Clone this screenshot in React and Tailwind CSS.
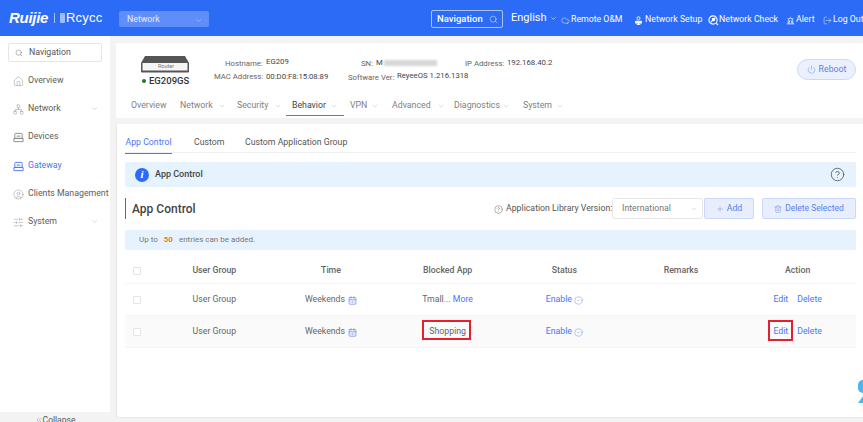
import React from "react";
import { Search, House, Network, ChevronDown, CircleUser, SlidersHorizontal, Cloud, Power, Plus, Trash2, CalendarDays, CircleCheck, CircleHelp, ChevronsLeft, LogOut } from "lucide-react";

const f = { fontFamily: 'Roboto,"Noto Sans",sans-serif' };

function GatewayIcon({ size = 11, strokeWidth = 1, className = "" }) {
  return (
    <svg width={size} height={size} viewBox="0 0 12 12" fill="none" stroke="currentColor" strokeWidth={strokeWidth} className={className}>
      <path d="M3 1.5h6a1 1 0 0 1 1 1V7H2V2.5a1 1 0 0 1 1-1Z" />
      <path d="M1 7h10v3.5H1z" />
      <path d="M4 4.5h4" />
    </svg>
  );
}
function SetupIcon({ size = 9, style }) {
  return (
    <svg width={size} height={size} viewBox="0 0 12 12" fill="none" stroke="currentColor" strokeWidth="1.2" style={style}>
      <circle cx="6" cy="3" r="2" />
      <path d="M2 7h8v2.5H2z" fill="currentColor" />
      <path d="M6 9.5V12M3.5 11.5h5" />
    </svg>
  );
}
function CheckIcon({ size = 11, style }) {
  return (
    <svg width={size} height={size} viewBox="0 0 12 12" fill="none" stroke="currentColor" strokeWidth="1.2" style={style}>
      <circle cx="5.5" cy="5.5" r="4.5" />
      <path d="M3 8l5-5" />
      <circle cx="6" cy="5" r="1.3" fill="currentColor" />
      <path d="M9 9l2 2" />
    </svg>
  );
}
function AlertIcon({ size = 10, style }) {
  return (
    <svg width={size} height={size} viewBox="0 0 12 12" fill="none" stroke="currentColor" strokeWidth="1" style={style}>
      <path d="M3 10V6a3 3 0 0 1 6 0v4M1 10.5h10M6 1v1M2 2.5l1 1M10 2.5l-1 1M5 6l-1 4M7 6l1 4" />
    </svg>
  );
}

function SideItem({ icon: I, label, y, active, chev }) {
  return (
    <div className={`absolute left-0 w-[110px] h-[20px] flex items-center pl-[13px] text-[8.75px] ${active ? "text-[#4a76f5]" : "text-[#5d5d5d]"}`} style={{ top: y }}>
      <I size={11} strokeWidth={1} className={`mr-[4px] shrink-0 ${active ? "" : "text-[#888]"}`} />
      <span className="whitespace-nowrap">{label}</span>
      {chev && <ChevronDown size={9} strokeWidth={1} className="absolute left-[90px] top-[5px] text-[#999]" />}
    </div>
  );
}

function NavTab({ label, x, chev = 0, dark }) {
  return (
    <div className={`absolute top-[97px] h-[18px] flex items-center text-[8.75px] whitespace-nowrap ${dark ? "text-[#444]" : "text-[#808080]"}`} style={{ left: x }}>
      {label}
      {chev > 0 && <ChevronDown size={8} strokeWidth={1} className="absolute top-[5px] text-[#999]" style={{ left: chev }} />}
    </div>
  );
}

function Check() {
  return <div className="ml-[8px] w-[8px] h-[8px] border border-[#e4e4e4] rounded-[1px] bg-white" />;
}

function DataRow({ bg, app }) {
  return (
    <div className={`grid grid-cols-[31px_repeat(6,1fr)] h-[32px] pt-px items-center text-center text-[8.75px] text-[#666] border-b border-[#f2f4f7] ${bg}`}>
      <Check />
      <div>User Group</div>
      <div className="flex items-center justify-center">Weekends<CalendarDays size={9} className="ml-[3px] text-[#6f8ff0]" /></div>
      <div>{app}</div>
      <div className="flex items-center justify-center text-[#4a76f5]">Enable<CircleCheck size={9} strokeWidth={1} className="ml-[2px]" /></div>
      <div />
      <div className="text-[#4a76f5] flex justify-center gap-[9px]"><span>Edit</span><span>Delete</span></div>
    </div>
  );
}

function HeadItem({ x, icon: I, label, size = 9, gap = 1 }) {
  return (
    <div className="absolute top-[11px] h-[18px] flex items-center text-[8.75px] whitespace-nowrap" style={{ left: x }}>
      <I size={size} strokeWidth={1.2} style={{ marginRight: gap }} />
      {label}
    </div>
  );
}

export default function App() {
  return (
    <div className="relative w-[863px] h-[422px] overflow-hidden bg-[#f3f3f3]" style={f}>
      {/* header */}
      <header className="absolute left-0 top-0 w-full h-[36px] bg-[#2b6bf6] text-white">
        <span className="absolute left-[9px] top-[9px] text-[15px] font-bold italic leading-[18px] tracking-[-0.3px]" style={{ fontFamily: '"Liberation Sans",sans-serif' }}>Ruijie</span>
        <div className="absolute left-[54px] top-[13px] w-px h-[10px] bg-[#a9c3fb]" />
        <div className="absolute left-[60px] top-[13px] w-[5px] h-[10px] rounded-[1px] bg-[#9dbcfa]" />
        <span className="absolute left-[66px] top-[9px] text-[13px] leading-[18px] tracking-[0.2px]" style={{ fontFamily: '"Liberation Sans",sans-serif' }}>Rcycc</span>
        <div className="absolute left-[119px] top-[11px] w-[90px] h-[16px] rounded-[2px] bg-[#5f8ef8] flex items-center pl-[8px] pt-px text-[8.75px] text-[#e8eeff]">
          Network
          <ChevronDown size={9} strokeWidth={1} className="absolute left-[75px] top-[5px]" />
        </div>
        <div className="absolute left-[431px] top-[10px] w-[72px] h-[18px] border border-[#a8c4fb] rounded-[2px] flex items-center pl-[5px] pt-px text-[9.5px] font-medium">
          Navigation
          <Search size={9} strokeWidth={1.2} className="absolute left-[57px] top-[4px]" />
        </div>
        <div className="absolute left-[511px] top-[9px] h-[18px] flex items-center text-[11px]">English<ChevronDown size={7} className="ml-[3px]" /></div>
        <HeadItem x={561} icon={Cloud} label="Remote O&M" />
        <HeadItem x={634} icon={SetupIcon} label="Network Setup" gap={2} />
        <HeadItem x={708} icon={CheckIcon} label="Network Check" size={11} gap={0} />
        <HeadItem x={786} icon={AlertIcon} label="Alert" gap={1} />
        <HeadItem x={823} icon={LogOut} label="Log Out" gap={1} />
      </header>

      {/* sidebar */}
      <aside className="absolute left-0 top-[36px] w-[110px] h-[386px] bg-white">
        <div className="absolute left-[8px] top-[7px] w-[94px] h-[19px] border border-[#e6e6e6] rounded-[2px] flex items-center pl-[6px] text-[8.75px] text-[#555]">
          <Search size={8} strokeWidth={1.2} className="mr-[6px]" />Navigation
        </div>
        <SideItem icon={House} label="Overview" y={35} />
        <SideItem icon={Network} label="Network" y={63} chev />
        <SideItem icon={GatewayIcon} label="Devices" y={91} />
        <SideItem icon={GatewayIcon} label="Gateway" y={120} active />
        <SideItem icon={CircleUser} label="Clients Management" y={148} />
        <SideItem icon={SlidersHorizontal} label="System" y={176} chev />
        <div className="absolute left-0 top-[376px] w-[110px] h-[10px] bg-[#f3f3f3] flex items-start pt-[3px] justify-center text-[8.5px] leading-[10px] text-[#555]">
          <ChevronsLeft size={8} strokeWidth={1} className="mt-px" />Collapse
        </div>
      </aside>

      {/* device card */}
      <section className="absolute left-[116px] top-[43px] w-[747px] h-[75px] bg-white rounded-l-[2px]" />
      <svg width="50" height="18" viewBox="0 0 50 18" className="absolute left-[140px] top-[55px]">
        <path d="M5 1h40l4 7v8.5a1 1 0 0 1-1 1H2a1 1 0 0 1-1-1V8Z" fill="#555" />
        <rect x="2.5" y="8" width="45" height="7.5" fill="#f5f5f5" />
      </svg>
      <div className="absolute left-[156px] top-[62px] w-[20px] h-[9px] flex items-center justify-center text-[5.5px] text-[#777]">Router</div>
      <div className="absolute left-[142px] top-[79px] w-[4px] h-[4px] rounded-full bg-[#1f7a1f]" />
      <div className="absolute left-[149px] top-[74px] text-[9.5px] font-medium text-[#333] leading-[14px]">EG209GS</div>

      <div className="absolute left-[225px] top-[58px] text-[7.75px] leading-[12px] text-[#666] whitespace-nowrap">Hostname:</div>
      <div className="absolute left-[266px] top-[56px] text-[7.75px] leading-[12px] text-[#444]">EG209</div>
      <div className="absolute left-[214px] top-[71px] text-[7.75px] leading-[12px] text-[#666] whitespace-nowrap">MAC Address:</div>
      <div className="absolute left-[266px] top-[71px] text-[7.75px] leading-[12px] text-[#444]">00:D0:F8:15:08:89</div>
      <div className="absolute left-[361px] top-[58px] text-[7.75px] leading-[12px] text-[#666]">SN:</div>
      <div className="absolute left-[376px] top-[57px] text-[7.75px] leading-[12px] text-[#444]">M</div>
      <div className="absolute left-[384px] top-[60px] w-[53px] h-[6px] bg-[#d7d7d7] blur-[1px]" />
      <div className="absolute left-[348px] top-[72px] text-[7.75px] leading-[12px] text-[#666] whitespace-nowrap">Software Ver:</div>
      <div className="absolute left-[397px] top-[70px] text-[7.75px] leading-[12px] text-[#444] whitespace-nowrap">ReyeeOS 1.216.1318</div>
      <div className="absolute left-[465px] top-[58px] text-[7.75px] leading-[12px] text-[#666] whitespace-nowrap">IP Address:</div>
      <div className="absolute left-[507px] top-[57px] text-[7.75px] leading-[12px] text-[#444]">192.168.40.2</div>

      <div className="absolute left-[797px] top-[59px] w-[59px] h-[21px] rounded-full bg-[#eaf0fe] border border-[#c9d8fb] flex items-center justify-center text-[8.75px] text-[#5a80ec]">
        <Power size={9} strokeWidth={1.2} className="mr-[3px]" />Reboot
      </div>

      <NavTab label="Overview" x={131} />
      <NavTab label="Network" x={180} chev={38} />
      <NavTab label="Security" x={237} chev={37} />
      <NavTab label="Behavior" x={292} chev={38} dark />
      <NavTab label="VPN" x={350} chev={21} />
      <NavTab label="Advanced" x={392} chev={45} />
      <NavTab label="Diagnostics" x={454} chev={48} />
      <NavTab label="System" x={523} chev={33} />
      <div className="absolute left-[286px] top-[115px] w-[58px] h-px bg-[#4a76f5]" />

      {/* main card */}
      <section className="absolute left-[116px] top-[124px] w-[747px] h-[294px] bg-white rounded-bl-[3px] border-b border-l border-[#e8e8e8]">
        <div className="absolute left-[8px] top-[0px] w-[731px] h-[29px] border-b border-[#eef0f3]" />
        <div className="absolute left-[8px] top-[10px] h-[18px] w-[47px] flex items-center justify-center whitespace-nowrap text-[8.75px] text-[#4a76f5] border-b border-[#4a76f5] box-content pb-px">App Control</div>
        <div className="absolute left-[77px] top-[10px] h-[18px] flex items-center text-[8.75px] text-[#555]">Custom</div>
        <div className="absolute left-[128px] top-[10px] h-[18px] flex items-center text-[8.75px] text-[#555] whitespace-nowrap">Custom Application Group</div>

        <div className="absolute left-[8px] top-[38px] w-[731px] h-[25px] rounded-[2px] bg-[#e6f3fe] flex items-center">
          <div className="ml-[10px] w-[14px] h-[14px] rounded-full bg-[#2b6bf6] text-white flex items-center justify-center text-[11px] font-bold italic" style={{ fontFamily: '"Liberation Serif",serif' }}>i</div>
          <span className="ml-[6px] text-[9px] font-medium text-[#444]">App Control</span>
          <CircleHelp size={15} strokeWidth={1.2} className="absolute left-[705px] top-[5px] text-[#444]" />
        </div>

        <div className="absolute left-[8px] top-[74px] w-[1px] h-[21px] bg-[#2b6bf6]" />
        <div className="absolute left-[15px] top-[77px] text-[12px] leading-[17px] font-medium text-[#444]">App Control</div>

        <div className="absolute left-[377px] top-[75px] h-[20px] flex items-center text-[8.75px] text-[#555] whitespace-nowrap">
          <CircleHelp size={9} strokeWidth={1.2} className="mr-[3px]" />Application Library Version:
        </div>
        <div className="absolute left-[495px] top-[74px] w-[91px] h-[21px] border border-[#e6e6e6] rounded-[3px] flex items-center pl-[9px] text-[8.75px] text-[#777]">
          International
          <ChevronDown size={8} strokeWidth={1} className="absolute left-[77px] top-[6px] text-[#aaa]" />
        </div>
        <div className="absolute left-[587px] top-[74px] w-[50px] h-[21px] border border-[#c9d8fb] bg-[#e8eefe] rounded-[2px] flex items-center justify-center text-[8.75px] text-[#5a80ec]">
          <Plus size={8} strokeWidth={1.2} className="mr-[3px]" />Add
        </div>
        <div className="absolute left-[645px] top-[74px] w-[94px] h-[21px] border border-[#c9d8fb] bg-[#e8eefe] rounded-[2px] flex items-center justify-center text-[8.5px] text-[#5a80ec] whitespace-nowrap">
          <Trash2 size={8} strokeWidth={1.2} className="mr-[3px]" />Delete Selected
        </div>

        <div className="absolute left-[8px] top-[106px] w-[731px] h-[20px] rounded-[2px] bg-[#e6f3fe] flex items-center pl-[14px] text-[8px] text-[#777]">
          Up to<span className="mx-[6px] text-[#f07b1d] font-bold">50</span>entries can be added.
        </div>

        <div className="absolute left-[8px] top-[133px] w-[731px]">
          <div className="grid grid-cols-[31px_repeat(6,1fr)] h-[27px] pt-[2px] items-center text-center text-[8.75px] text-[#666] font-medium border-b border-[#f2f4f7]">
            <Check />
            <div>User Group</div>
            <div>Time</div>
            <div>Blocked App</div>
            <div>Status</div>
            <div>Remarks</div>
            <div>Action</div>
          </div>
          <DataRow app={<span>Tmall... <span className="text-[#4a76f5]">More</span></span>} />
          <DataRow bg="bg-[#fafafa]" app={<span>Shopping</span>} />
        </div>
      </section>

      <div className="absolute left-[422px] top-[320px] w-[49px] h-[20px] border-2 border-[#e3202e]" />
      <div className="absolute left-[768px] top-[320px] w-[25px] h-[21px] border-2 border-[#e3202e]" />
      <div className="absolute left-[858px] top-[380px] w-[5px] h-[13px] bg-[#4db4ee] rounded-l-full" />
      <div className="absolute left-[858px] top-[396px] w-[5px] h-[7px] bg-[#4db4ee]" style={{ clipPath: "polygon(100% 0,100% 100%,0 100%)" }} />
    </div>
  );
}
